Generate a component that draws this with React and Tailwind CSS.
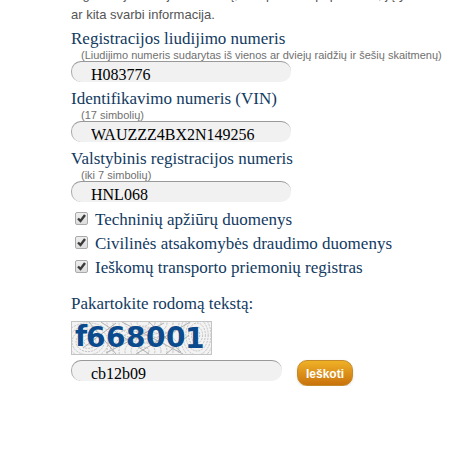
import React from "react";

function RoundInput({ id, value, className }) {
  return (
    <input
      id={id}
      type="text"
      defaultValue={value}
      className={`block h-[21px] rounded-[10px] border-t border-l border-t-[#999] border-l-[#aaa] bg-[#f1f1f1] pt-1.5 pl-[19px] text-base leading-[14px] text-black outline-none ${className}`}
    />
  );
}

function Field({ id, label, hint, value }) {
  return (
    <div>
      <label htmlFor={id} className="block h-5 text-[17px] leading-5 text-[#123a5f] whitespace-nowrap">
        {label}
      </label>
      <p className="ml-2.5 h-3 font-['Liberation_Sans',Arial,sans-serif] text-[11px] leading-3 text-[#707070] whitespace-nowrap">
        {hint}
      </p>
      <RoundInput id={id} value={value} className="w-[220px]" />
    </div>
  );
}

function Check({ id, label }) {
  return (
    <div className="flex h-6 items-start pl-1">
      <span className="relative mt-[5px] block size-[13px]">
        <input
          id={id}
          type="checkbox"
          defaultChecked
          className="block size-[13px] appearance-none rounded-xs border border-[#aaa] bg-linear-to-b from-[#eee] to-[#ddd]"
        />
        <svg viewBox="0 0 13 13" className="pointer-events-none absolute inset-0 size-[13px]" aria-hidden="true">
          <path d="M3 6.5 L5.5 9 L10 3" fill="none" stroke="#3b3b3b" strokeWidth="2.4" />
        </svg>
      </span>
      <label htmlFor={id} className="ml-[7px] text-[17px] leading-[26px] text-[#123a5f] whitespace-nowrap">
        {label}
      </label>
    </div>
  );
}

const waves = [4, 8, 12, 16, 20, 24];

function Captcha() {
  return (
    <svg width="141" height="34" viewBox="0 0 141 34" className="block" role="img" aria-label="f668001">
      <rect width="141" height="34" fill="#f3f3f3" />
      <g fill="none" stroke="#c4c4c4" strokeWidth="1" strokeDasharray="2 1">
        {waves.map((r) => (
          <g key={r}>
            <ellipse cx="17" cy="21" rx={r} ry={r * 0.8} />
            <ellipse cx="126" cy="14" rx={r * 0.7} ry={r} />
            <ellipse cx="72" cy="30" rx={r * 1.5} ry={r} />
            <ellipse cx="72" cy="2" rx={r * 1.5} ry={r * 0.8} />
          </g>
        ))}
      </g>
      <path
        d="M18 1 L45 33 M30 1 L78 33 M35 32 L93 2 M51 1 L112 33 M65 33 L119 1 M95 33 L118 14 M78 1 L110 31 M12 27 L45 2"
        stroke="#b0b0b0"
        fill="none"
        strokeWidth="1"
      />
      <rect x="0.5" y="0.5" width="140" height="33" fill="none" stroke="#c4c4c4" />
      <g fill="#0b4a8c" fontFamily="'DejaVu Sans', sans-serif" fontWeight="700" fontSize="28">
        <text x="4" y="25">f</text>
        <text x="15" y="26">6</text>
        <text x="35" y="26">6</text>
        <text x="55" y="26">8</text>
        <text x="75" y="26">0</text>
        <text x="95" y="26">0</text>
        <text x="114" y="27">1</text>
      </g>
    </svg>
  );
}

export default function App() {
  return (
    <main className="overflow-hidden bg-white pl-[71px] font-['Liberation_Serif','Times_New_Roman',serif]">
      <div className="flex h-[25px] flex-col justify-end overflow-hidden font-['Liberation_Sans',Arial,sans-serif] text-[13px] leading-5 text-[#555] whitespace-nowrap">
        <p>registracijos liudijimo numerį, kuri pateikta papildomai, jų yra</p>
        <p>ar kita svarbi informacija.</p>
      </div>
      <form className="pt-1" onSubmit={(e) => e.preventDefault()}>
        <div className="grid gap-[7px]">
          <Field
            id="certificate"
            label="Registracijos liudijimo numeris"
            hint="(Liudijimo numeris sudarytas iš vienos ar dviejų raidžių ir šešių skaitmenų)"
            value="H083776"
          />
          <Field id="vin" label="Identifikavimo numeris (VIN)" hint="(17 simbolių)" value="WAUZZZ4BX2N149256" />
          <Field id="plate" label="Valstybinis registracijos numeris" hint="(iki 7 simbolių)" value="HNL068" />
        </div>
        <div className="mt-[5px]">
          <Check id="inspection" label="Techninių apžiūrų duomenys" />
          <Check id="insurance" label="Civilinės atsakomybės draudimo duomenys" />
          <Check id="wanted" label="Ieškomų transporto priemonių registras" />
        </div>
        <label htmlFor="captcha" className="mt-3 block h-[30px] text-[17px] leading-[26px] text-[#123a5f]">
          Pakartokite rodomą tekstą:
        </label>
        <Captcha />
        <div className="mt-[5px] flex items-start gap-[15px]">
          <RoundInput id="captcha" value="cb12b09" className="w-[211px]" />
          <button
            type="submit"
            className="h-[26px] w-14 rounded-[10px] border border-[#c58a2a] bg-linear-to-b from-[#efb126] to-[#c9720c] pt-0.5 font-['Liberation_Sans',Arial,sans-serif] text-xs font-bold text-white shadow-sm"
          >
            Ieškoti
          </button>
        </div>
      </form>
    </main>
  );
}
